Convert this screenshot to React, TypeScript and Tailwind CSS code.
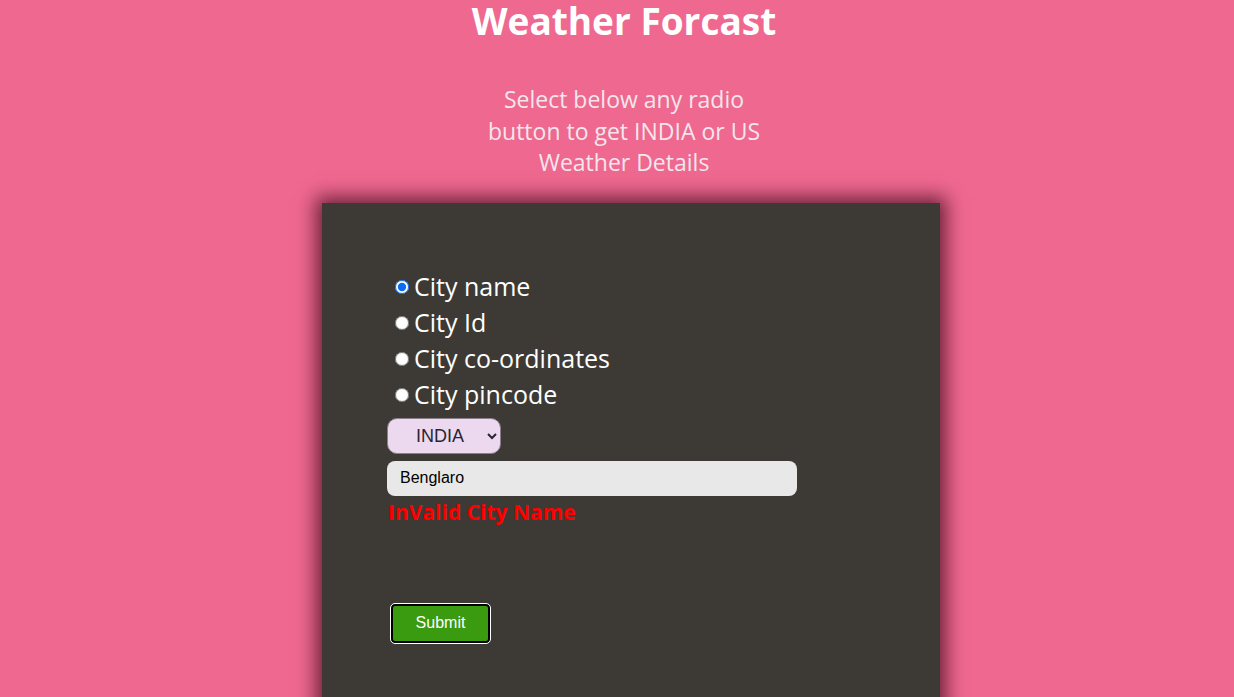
export default function App() {
  return (
    <div className="min-h-[697px] overflow-hidden bg-[#ef6890] font-['Open_Sans',sans-serif] text-white">
      <div className="pl-[14px]">
        <h1 className="text-center text-[37px] font-bold leading-[42px]">Weather Forcast</h1>

        <p className="mx-auto mt-[42px] w-[310px] text-center text-[23px] leading-[31.5px] text-[#f3e6ec]">
          Select below any radio button to get INDIA or US Weather Details
        </p>
      </div>

      <div className="pl-[28px]">
        <div className="mx-auto mt-[24px] h-[520px] w-[618px] bg-[#3d3a35] pl-[65px] pt-[66px] shadow-[0_0_18px_6px_rgba(60,10,30,0.75)]">
          <div className="flex flex-col">
            {['City name', 'City Id', 'City co-ordinates', 'City pincode'].map((label, i) => (
              <label key={label} className="flex h-[36px] items-center text-[25px]">
                <input
                  type="radio"
                  name="mode"
                  defaultChecked={i === 0}
                  className="ml-[8px] mr-[5px] h-[14px] w-[14px] accent-[#0b6cf0]"
                />
                {label}
              </label>
            ))}
          </div>

          <select className="mt-[5px] h-[36px] w-[114px] rounded-[10px] border border-[#8c7f8c] bg-[#ecd9f0] pl-[24px] font-['Liberation_Sans',sans-serif] text-[18px] text-[#2a2430]">
            <option>INDIA</option>
            <option>US</option>
          </select>

          <input
            type="text"
            defaultValue="Benglaro"
            className="mt-[7px] block h-[35px] w-[410px] rounded-[8px] bg-[#e8e8e8] px-[13px] font-['Liberation_Sans',sans-serif] text-[16px] text-black outline-none"
          />

          <div className="mt-[2px] pl-px text-[21px] font-bold leading-[28px] text-[#ff0000]">InValid City Name</div>

          <button className="ml-[4px] mt-[78px] h-[39px] w-[99px] rounded-[4px] border-2 border-black bg-[#3a9a10] font-['Liberation_Sans',sans-serif] text-[16px] text-white outline outline-1 outline-white">
            Submit
          </button>
        </div>
      </div>
    </div>
  )
}
